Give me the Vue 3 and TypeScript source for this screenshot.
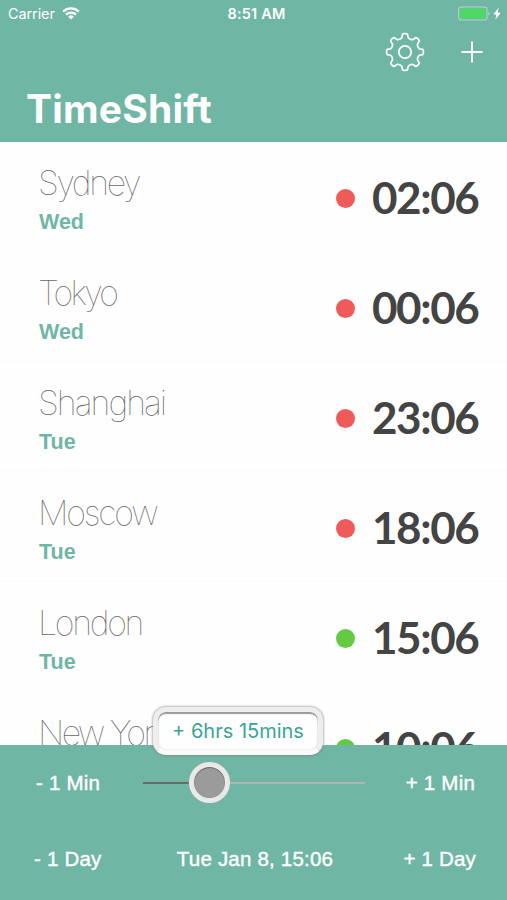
<script setup lang="ts">
interface City {
  name: string
  day: string
  time: string
  awake: boolean
  spacing: number
}

const cities: City[] = [
  { name: 'Sydney', day: 'Wed', time: '02:06', awake: false, spacing: -2.4 },
  { name: 'Tokyo', day: 'Wed', time: '00:06', awake: false, spacing: -2.8 },
  { name: 'Shanghai', day: 'Tue', time: '23:06', awake: false, spacing: -2 },
  { name: 'Moscow', day: 'Tue', time: '18:06', awake: false, spacing: -2.2 },
  { name: 'London', day: 'Tue', time: '15:06', awake: true, spacing: -2.3 },
  { name: 'New York', day: 'Tue', time: '10:06', awake: true, spacing: -2.6 },
]

// Outline of the settings gear: eight rounded teeth around (20, 20).
function gearPath(): string {
  const point = (r: number, deg: number): string => {
    const a = ((deg - 90) * Math.PI) / 180
    return `${(20 + r * Math.cos(a)).toFixed(2)} ${(20 + r * Math.sin(a)).toFixed(2)}`
  }
  let d = `M${point(18.3, -6)}`
  for (let i = 0; i < 8; i++) {
    const c = i * 45
    d += `Q${point(18.7, c)} ${point(18.3, c + 6)}`
    d += `Q${point(18.2, c + 9)} ${point(16.8, c + 9.5)}`
    d += `Q${point(14.6, c + 11)} ${point(14.2, c + 16)}`
    d += `Q${point(13.7, c + 22.5)} ${point(14.2, c + 29)}`
    d += `Q${point(14.6, c + 34)} ${point(16.8, c + 35.5)}`
    d += `Q${point(18.2, c + 36)} ${point(18.3, c + 39)}`
  }
  return d + 'Z'
}
const gear = gearPath()
</script>

<template>
  <div class="phone">
    <header class="header">
      <div class="status">
        <div class="carrier">
          <span>Carrier</span>
          <svg class="wifi" viewBox="0 0 18 13" width="18" height="13">
            <path d="M1.2 4.6a11.2 11.2 0 0 1 15.6 0M4 7.6a7.2 7.2 0 0 1 10 0" fill="none" stroke="#fff" stroke-width="2.2" />
            <path d="M6.2 9.7a4 4 0 0 1 5.6 0L9 12.5Z" fill="#fff" />
          </svg>
        </div>
        <span class="clock">8:51 AM</span>
        <div class="power">
          <svg viewBox="0 0 45 16" width="45" height="16">
            <rect x=".6" y="1" width="28.4" height="13" rx="2.5" fill="none" stroke="#b3d3c9" stroke-width="1.1" />
            <rect x="2.2" y="2.6" width="25.2" height="9.8" rx="1" fill="#4cd964" />
            <path d="M30.3 5.4v4.2q1.3-.5 1.3-2.1t-1.3-2.1" fill="#b3d3c9" />
            <path d="M40.7 1.6 35.4 8.4h3L37.3 13.7 42.8 6.7h-3.1Z" fill="#fff" />
          </svg>
        </div>
      </div>
      <div class="actions">
        <svg viewBox="0 0 40 40" width="40" height="40" fill="none" stroke="#fff" stroke-width="1.7">
          <path :d="gear" />
          <circle cx="20" cy="20" r="6.2" />
        </svg>
        <svg viewBox="0 0 22 22" width="22" height="22">
          <path d="M11 .5v21M.5 11h21" stroke="#fff" stroke-width="2" />
        </svg>
      </div>
      <h1 class="title">TimeShift</h1>
    </header>

    <main class="list">
      <section v-for="city in cities" :key="city.name" class="row">
        <div class="place">
          <div class="name" :style="{ letterSpacing: city.spacing + 'px' }">{{ city.name }}</div>
          <div class="day">{{ city.day }}</div>
        </div>
        <i class="dot" :class="{ awake: city.awake }"></i>
        <div class="time">{{ city.time }}</div>
      </section>
    </main>

    <footer class="panel">
      <div class="controls">
        <span>- 1 Min</span>
        <div class="slider">
          <div class="track"></div>
          <div class="thumb"></div>
          <div class="bubble">+ 6hrs 15mins</div>
        </div>
        <span>+ 1 Min</span>
      </div>
      <div class="controls days">
        <span>- 1 Day</span>
        <span>Tue Jan 8, 15:06</span>
        <span>+ 1 Day</span>
      </div>
    </footer>
  </div>
</template>

<style>
body {
  margin: 0;
}
</style>

<style scoped>
.phone {
  width: 507px;
  height: 900px;
  display: flex;
  flex-direction: column;
  overflow: hidden;
  background: #fefefe;
  font-family: Inter, "Liberation Sans", sans-serif;
}
.header {
  height: 142px;
  flex: none;
  background: #70b6a5;
  color: #fff;
}
.status {
  height: 27px;
  display: grid;
  grid-template-columns: 1fr auto 1fr;
  align-items: center;
  font-size: 14.5px;
}
.carrier {
  display: flex;
  align-items: center;
  gap: 7px;
  padding-left: 8px;
}
.carrier span {
  letter-spacing: -0.1px;
}
.clock {
  font-weight: 600;
  font-size: 14.5px;
  letter-spacing: 0.2px;
  padding-left: 6px;
}
.power {
  display: flex;
  justify-content: flex-end;
  padding-right: 4px;
}
.actions {
  height: 49px;
  display: flex;
  justify-content: flex-end;
  align-items: center;
  gap: 36px;
  padding-right: 24px;
}
.title {
  margin: 9px 0 0 26px;
  font-size: 39px;
  line-height: 48px;
  font-weight: 700;
  letter-spacing: 0.2px;
}
.list {
  height: 603px;
  flex: none;
  overflow: hidden;
}
.row {
  height: 110px;
  box-sizing: border-box;
  border-bottom: 1px solid #fbfbfb;
  display: flex;
  align-items: center;
  padding: 3px 26px 0 38px;
}
.place {
  flex: 1;
  height: 72px;
}
.name {
  height: 42px;
  line-height: 42px;
  font-size: 34px;
  font-weight: 100;
  color: #666;
  white-space: nowrap;
}
.day {
  margin: 4px 0 0 1px;
  line-height: 28px;
  font-family: "Liberation Sans", Arial, sans-serif;
  font-size: 21.5px;
  font-weight: 700;
  color: #70b6a5;
}
.dot {
  width: 19px;
  height: 19px;
  border-radius: 50%;
  background: #ee5b58;
  margin-right: 17px;
}
.dot.awake {
  background: #63ca44;
}
.time {
  width: 109px;
  margin-top: -3px;
  font-family: Lato, sans-serif;
  font-size: 44px;
  line-height: 52px;
  font-weight: 700;
  color: #444;
  letter-spacing: -1.4px;
  white-space: nowrap;
}
.panel {
  height: 155px;
  flex: none;
  background: #70b6a5;
  color: #fff;
  font-family: "Liberation Sans", Arial, sans-serif;
  font-size: 20.5px;
  letter-spacing: 0.2px;
  -webkit-text-stroke: 0.4px #fff;
}
.controls {
  height: 76px;
  display: grid;
  grid-template-columns: 107px 1fr 107px;
  align-items: center;
  padding: 0 32px 0 36px;
  white-space: nowrap;
}
.controls > :last-child {
  text-align: right;
}
.days {
  padding: 0 31px 0 34px;
  grid-template-columns: 80px 1fr 80px;
  text-align: center;
}
.days > :first-child {
  text-align: left;
}
.slider {
  position: relative;
  width: 222px;
  height: 40px;
  display: flex;
  align-items: center;
}
.track {
  width: 100%;
  height: 2.5px;
  background: linear-gradient(90deg, #666b69 30%, #b0b5b2 30%);
}
.thumb {
  position: absolute;
  left: 46px;
  top: -1px;
  width: 41px;
  height: 41px;
  box-sizing: border-box;
  border: 5px solid #e9e9e9;
  border-radius: 50%;
  background: #9b9b9b;
  box-shadow: inset 0 1px 1px #666, inset 0 0 1px #777, 0 0 2px #a4aaa7;
}
.bubble {
  position: absolute;
  left: 10px;
  top: -56px;
  width: 170px;
  height: 48px;
  box-sizing: border-box;
  border: 5px solid #eee;
  border-bottom-color: #fafafa;
  border-radius: 13px;
  background: #fefefe;
  box-shadow: inset 0 2px 1px #999, inset 0 0 2px #ccc, 0 0 3px #777;
  color: #39a695;
  font-family: Inter, sans-serif;
  font-size: 20px;
  letter-spacing: 0;
  line-height: 38px;
  text-align: center;
  -webkit-text-stroke: 0;
}
</style>
